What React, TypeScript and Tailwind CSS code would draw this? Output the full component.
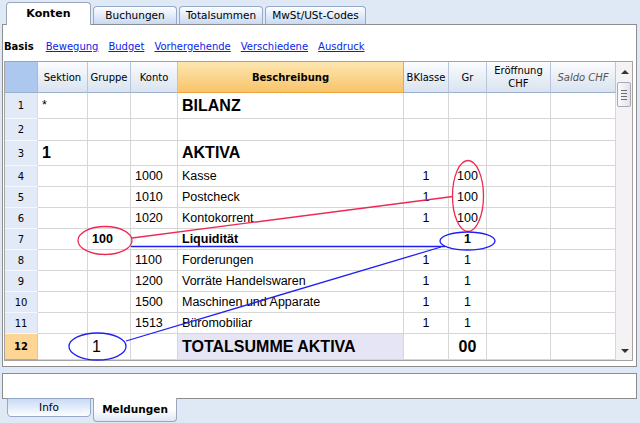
import React from "react";

type Row = {
	n: string;
	h: string;
	sek?: React.ReactNode;
	grp?: React.ReactNode;
	kto?: string;
	desc?: React.ReactNode;
	bk?: string;
	gr?: React.ReactNode;
	total?: boolean;
};

const ROWS: Row[] = [
	{ n: "1", h: "h-[26px]", sek: "*", desc: <span className="text-[16px] font-bold">BILANZ</span> },
	{ n: "2", h: "h-[22px]" },
	{
		n: "3",
		h: "h-[25px]",
		sek: <span className="text-[16px] font-bold">1</span>,
		desc: <span className="text-[16px] font-bold">AKTIVA</span>,
	},
	{ n: "4", h: "h-[21px]", kto: "1000", desc: "Kasse", bk: "1", gr: "100" },
	{ n: "5", h: "h-[21px]", kto: "1010", desc: "Postcheck", bk: "1", gr: "100" },
	{ n: "6", h: "h-[21px]", kto: "1020", desc: "Kontokorrent", bk: "1", gr: "100" },
	{
		n: "7",
		h: "h-[21px]",
		grp: <span className="font-bold">100</span>,
		desc: <span className="font-bold">Liquidität</span>,
		gr: <span className="font-bold">1</span>,
	},
	{ n: "8", h: "h-[21px]", kto: "1100", desc: "Forderungen", bk: "1", gr: "1" },
	{ n: "9", h: "h-[21px]", kto: "1200", desc: "Vorräte Handelswaren", bk: "1", gr: "1" },
	{ n: "10", h: "h-[21px]", kto: "1500", desc: "Maschinen und Apparate", bk: "1", gr: "1" },
	{ n: "11", h: "h-[21px]", kto: "1513", desc: "Büromobiliar", bk: "1", gr: "1" },
	{
		n: "12",
		h: "h-[26px]",
		total: true,
		grp: <span className="text-[16px]">1</span>,
		desc: <span className="text-[16px] font-bold">TOTALSUMME AKTIVA</span>,
		gr: <span className="text-[16px] font-bold">00</span>,
	},
];

const GRID = "grid grid-cols-[33px_50px_43px_47px_226px_45px_38px_64px_65px]";
const CELL = "flex items-center overflow-hidden whitespace-nowrap border-r border-b border-[#d6d6d6] px-[4px]";
const HEAD = "flex items-center justify-center border-r border-b border-r-[#b7c6da] border-b-[#9bb0cc] bg-linear-to-b from-[#fbfcfe] to-[#d9e3f0] text-center leading-[13px]";

const LINKS = ["Bewegung", "Budget", "Vorhergehende", "Verschiedene", "Ausdruck"];

function Tab({ label, w }: { label: string; w: string }) {
	return (
		<div
			className={`flex h-[18px] ${w} items-center justify-center rounded-t-[4px] border border-b-0 border-[#95a9cb] bg-linear-to-b from-[#fdfeff] to-[#c8d9f4] text-[10.5px]`}
		>
			{label}
		</div>
	);
}

function Scrollbar() {
	return (
		<div className="flex w-[16px] flex-col items-center bg-[#f4f2f5]">
			<svg width="16" height="20" viewBox="0 0 16 20">
				<path d="M5 12 L9 8 L13 12 Z" fill="#333" />
			</svg>
			<div className="flex h-[25px] w-[14px] flex-col items-center justify-center gap-[2px] rounded-[2px] border border-[#a9a9b3] bg-linear-to-r from-[#fbfbfc] to-[#e2e2e9]">
				<div className="h-px w-[6px] bg-[#6c6c74]" />
				<div className="h-px w-[6px] bg-[#6c6c74]" />
				<div className="h-px w-[6px] bg-[#6c6c74]" />
				<div className="h-px w-[6px] bg-[#6c6c74]" />
			</div>
			<div className="flex-1" />
			<svg width="16" height="14" viewBox="0 0 16 14">
				<path d="M5 3 L13 3 L9 7 Z" fill="#333" />
			</svg>
		</div>
	);
}

export default function App() {
	return (
		<div className="relative h-[423px] w-[640px] overflow-hidden bg-[#dfe9f5] font-['DejaVu_Sans',sans-serif] text-[10px] text-black">
			{/* Top tabs */}
			<div className="flex h-[24px] items-end gap-[2px] pl-[6px]">
				<div className="relative z-10 -mb-px flex h-[23px] w-[85px] items-center justify-center rounded-t-[4px] border border-b-0 border-[#9aa6ba] bg-white text-[11px] font-bold">
					Konten
				</div>
				<Tab label="Buchungen" w="w-[84px]" />
				<Tab label="Totalsummen" w="w-[84px]" />
				<Tab label="MwSt/USt-Codes" w="w-[101px]" />
			</div>

			{/* Main panel */}
			<div className="ml-[2px] h-[343px] w-[635px] border border-[#8e8e8e] bg-white">
				{/* Sub views */}
				<div className="flex h-[36px] items-center gap-[10px] pl-[1px] pt-[6px]">
					<span className="mr-[2px] font-bold">Basis</span>
					{LINKS.map((l) => (
						<span key={l} className="text-[#0b1ee8] underline">
							{l}
						</span>
					))}
				</div>

				{/* Table */}
				<div className="ml-[1px] flex w-[629px] border border-[#a3a3a3]">
					<div className="w-[611px]">
						<div className={`${GRID} h-[31px]`}>
							<div className="border-b border-r border-b-[#9bb0cc] border-r-[#9fbbe2] bg-[#adc8ee]" />
							<div className={HEAD}>Sektion</div>
							<div className={HEAD}>Gruppe</div>
							<div className={HEAD}>Konto</div>
							<div className="flex items-center justify-center border-b border-r border-[#f0a640] bg-linear-to-b from-[#fde6b0] to-[#f8c46a] font-bold">
								Beschreibung
							</div>
							<div className={HEAD}>BKlasse</div>
							<div className={HEAD}>Gr</div>
							<div className={HEAD}>
								Eröffnung
								<br />
								CHF
							</div>
							<div className={`${HEAD} italic text-[#555]`}>Saldo CHF</div>
						</div>

						{ROWS.map((r) => (
							<div key={r.n} className={`${GRID} ${r.h} font-['Liberation_Sans',Arial,sans-serif] text-[12.5px]`}>
								<div
									className={`flex items-center justify-center border-r border-b font-['DejaVu_Sans',sans-serif] text-[10px] ${
										r.total
											? "border-r-[#f3c27a] border-b-[#f0a03a] bg-[#fdd594] font-bold"
											: "border-r-[#d3deec] border-b-[#f4f7fb] bg-[#e1eaf6]"
									}`}
								>
									{r.n}
								</div>
								<div className={CELL}>{r.sek}</div>
								<div className={CELL}>{r.grp}</div>
								<div className={CELL}>{r.kto}</div>
								<div className={`${CELL} ${r.total ? "bg-[#e6e5f6]" : ""}`}>{r.desc}</div>
								<div className={`${CELL} justify-center`}>{r.bk}</div>
								<div className={`${CELL} justify-center`}>{r.gr}</div>
								<div className={CELL} />
								<div className={CELL} />
							</div>
						))}
					</div>
					<Scrollbar />
				</div>
			</div>

			{/* Message box */}
			<div className="ml-[2px] mt-[6px] h-[26px] w-[635px] border border-[#8c8c8c] bg-white" />

			{/* Bottom tabs */}
			<div className="flex items-start gap-[2px] pl-[7px]">
				<div className="-mt-px flex h-[19px] w-[84px] items-center justify-center rounded-b-[4px] border border-[#95a9cb] bg-linear-to-b from-[#c9daf5] to-[#fdfeff] text-[10.5px]">
					Info
				</div>
				<div className="relative z-10 -mt-px flex h-[24px] w-[84px] items-center justify-center rounded-b-[4px] border border-t-0 border-[#9aa6ba] bg-linear-to-b from-white via-white to-[#dde7f7] text-[10.5px] font-bold">
					Meldungen
				</div>
			</div>

			{/* Annotations drawn over the table */}
			<svg
				className="pointer-events-none absolute left-0 top-0"
				width="640"
				height="423"
				viewBox="0 0 640 423"
				fill="none"
				strokeWidth="1.3"
			>
				<ellipse cx="105" cy="240.5" rx="27" ry="14" stroke="#ee2a52" />
				<ellipse cx="468" cy="196" rx="15.5" ry="35.5" stroke="#ee2a52" />
				<line x1="132" y1="238" x2="453" y2="196.5" stroke="#ee2a52" />
				<ellipse cx="467.5" cy="241" rx="27.5" ry="9" stroke="#1f1ff2" />
				<line x1="131" y1="246.5" x2="445" y2="246.5" stroke="#1f1ff2" />
				<line x1="441" y1="247" x2="126" y2="341" stroke="#1f1ff2" />
				<ellipse cx="97.5" cy="346.5" rx="28.5" ry="13.5" stroke="#1f1ff2" />
			</svg>
		</div>
	);
}
